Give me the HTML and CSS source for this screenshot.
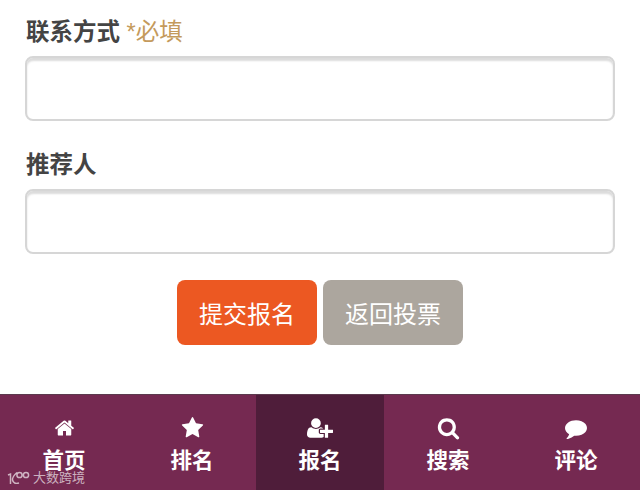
FILE: index.html
```html
<!DOCTYPE html>
<html lang="zh-CN">
<head>
  <meta charset="UTF-8">
  <meta name="viewport" content="width=device-width, initial-scale=1.0">
  <title>报名</title>
  <link rel="stylesheet" href="styles.css">
</head>
<body>
  <form class="signup">
    <div class="form-group">
      <label for="contact">联系方式 <span class="required">*必填</span></label>
      <input type="text" id="contact" name="contact">
    </div>
    <div class="form-group">
      <label for="referrer">推荐人</label>
      <input type="text" id="referrer" name="referrer">
    </div>
    <div class="actions">
      <button type="submit" class="btn submit">提交报名</button>
      <button type="button" class="btn back">返回投票</button>
    </div>
  </form>

  <!-- Bottom navigation -->
  <nav class="tabbar">
    <a class="tab" href="#">
      <svg class="icon icon-home" viewBox="0 0 1792 1792"><path d="M1472 992v480q0 26-19 45t-45 19h-384v-384h-256v384h-384q-26 0-45-19t-19-45v-480q0-1 .5-3t.5-3l575-474 575 474q1 2 1 6zm223-69l-62 74q-8 9-21 11h-3q-13 0-21-7l-692-577-692 577q-12 8-24 7-13-2-21-11l-62-74q-8-10-7-23.5t11-21.5l719-599q32-26 76-26t76 26l244 204v-195q0-14 9-23t23-9h192q14 0 23 9t9 23v408l219 182q10 8 11 21.5t-7 23.5z"/></svg>
      <span>首页</span>
    </a>
    <a class="tab" href="#">
      <svg class="icon icon-star" viewBox="0 0 1792 1792"><path d="M1728 647q0 22-26 48l-363 354 86 500q1 7 1 20 0 21-10.5 35.5t-30.5 14.5q-19 0-40-12l-449-236-449 236q-22 12-40 12-21 0-31.5-14.5t-10.5-35.5q0-6 2-20l86-500-364-354q-25-27-25-48 0-37 56-46l502-73 225-455q19-41 49-41t49 41l225 455 502 73q56 9 56 46z"/></svg>
      <span>排名</span>
    </a>
    <a class="tab active" href="#">
      <svg class="icon icon-user" viewBox="0 0 2048 1792"><path d="M704 896q-159 0-271.5-112.5t-112.5-271.5 112.5-271.5 271.5-112.5 271.5 112.5 112.5 271.5-112.5 271.5-271.5 112.5zm960 128h352q13 0 22.5 9.5t9.5 22.5v192q0 13-9.5 22.5t-22.5 9.5h-352v352q0 13-9.5 22.5t-22.5 9.5h-192q-13 0-22.5-9.5t-9.5-22.5v-352h-352q-13 0-22.5-9.5t-9.5-22.5v-192q0-13 9.5-22.5t22.5-9.5h352v-352q0-13 9.5-22.5t22.5-9.5h192q13 0 22.5 9.5t9.5 22.5v352zm-736 224q0 52 38 90t90 38h256v238q-68 50-171 50h-874q-121 0-194-69t-73-190q0-53 3.5-103.5t14-109 26.5-108.5 43-97.5 62-81 85.5-53.5 111.5-20q19 0 39 17 79 61 154.5 91.5t164.5 30.5 164.5-30.5 154.5-91.5q20-17 39-17 132 0 217 96h-223q-52 0-90 38t-38 90v192z"/></svg>
      <span>报名</span>
    </a>
    <a class="tab" href="#">
      <svg class="icon icon-search" viewBox="0 0 1792 1792"><path d="M1216 832q0-185-131.5-316.5t-316.5-131.5-316.5 131.5-131.5 316.5 131.5 316.5 316.5 131.5 316.5-131.5 131.5-316.5zm512 832q0 52-38 90t-90 38q-54 0-90-38l-343-342q-179 124-399 124-143 0-273.5-55.5t-225-150-150-225-55.5-273.5 55.5-273.5 150-225 225-150 273.5-55.5 273.5 55.5 225 150 150 225 55.5 273.5q0 220-124 399l343 343q37 37 37 90z"/></svg>
      <span>搜索</span>
    </a>
    <a class="tab" href="#">
      <svg class="icon icon-comment" viewBox="0 0 1792 1792"><path d="M1792 896q0 174-120 321.5t-326 233-450 85.5q-70 0-145-8-198 175-460 242-49 14-114 22-17 2-30.5-9t-17.5-29v-1q-3-4-.5-12t2-10 4.5-9.5l6-9 7-8.5 8-9q7-8 31-34.5t34.5-38 31-39.5 32.5-51 27-59 26-76q-157-89-247.5-220t-90.5-281q0-130 71-248.5t191-204.5 286-136.5 348-50.5q244 0 450 85.5t326 233 120 321.5z"/></svg>
      <span>评论</span>
    </a>
  </nav>

  <!-- Watermark over the first tab -->
  <div class="watermark">
    <svg class="watermark-logo" viewBox="0 0 23 14"><path d="M1 4 L3.5 3 L3.5 13 M10 1.5 Q5 6 5.5 9 Q6.5 13.5 12 12"/><circle cx="12.5" cy="4" r="2.6"/><circle cx="19" cy="4" r="2.6"/></svg>
    <span>大数跨境</span>
  </div>
</body>
</html>
```

FILE: styles.css
```css
html, body {
  height: 100%;
}
body {
  position: relative;
  display: flex;
  flex-direction: column;
  height: 490px;
  margin: 0;
  overflow: hidden;
  background-color: #fff;
  font-family: "Liberation Sans", "Noto Sans CJK SC", sans-serif;
}
.signup {
  flex: 1;
  padding: 14px 25px 0;
}
.form-group {
  margin-bottom: 26px;
}
label {
  display: block;
  height: 34px;
  margin-bottom: 8px;
  padding-left: 1px;
  font-size: 23.5px;
  line-height: 36px;
  font-weight: bold;
  color: #444;
}
.required {
  font-weight: normal;
  color: #c49a5c;
}
input {
  display: block;
  width: 100%;
  height: 65px;
  padding: 10px;
  border: 2px solid #d6d6d6;
  border-radius: 8px;
  box-sizing: border-box;
  background-color: #fff;
  box-shadow: inset 0 3px 2px rgba(0, 0, 0, 0.14);
}
.actions {
  display: flex;
  justify-content: center;
  gap: 6px;
}
.btn {
  width: 140px;
  height: 65px;
  border: none;
  border-radius: 8px;
  font-family: inherit;
  font-size: 24px;
  color: #fff;
}
.submit {
  background-color: #ec5822;
}
.back {
  background-color: #aca69e;
}
.tabbar {
  display: flex;
  height: 96px;
  border-top: 1px solid #5c3a4e;
  box-sizing: border-box;
  background-color: #752951;
}
.tab {
  flex: 1;
  display: flex;
  flex-direction: column;
  align-items: center;
  color: #fff;
  text-decoration: none;
  font-size: 21.5px;
  font-weight: bold;
  line-height: 34px;
}
.tab span {
  margin-top: 4px;
}
.tab.active {
  background-color: #4f1d3a;
}
.icon {
  display: block;
  height: 24px;
  margin-top: 21px;
  fill: #fff;
}
.icon-home {
  width: 21px;
}
.icon-star, .icon-search {
  width: 23px;
}
.icon-comment {
  width: 22px;
}
.icon-user {
  width: 26px;
}
.watermark {
  position: absolute;
  left: 7px;
  top: 468px;
  display: flex;
  align-items: center;
  gap: 3px;
  font-size: 13px;
  line-height: 20px;
  color: rgba(255, 255, 255, 0.65);
}
.watermark-logo {
  width: 23px;
  height: 14px;
  fill: none;
  stroke: rgba(255, 255, 255, 0.65);
  stroke-width: 1.5;
}
```
